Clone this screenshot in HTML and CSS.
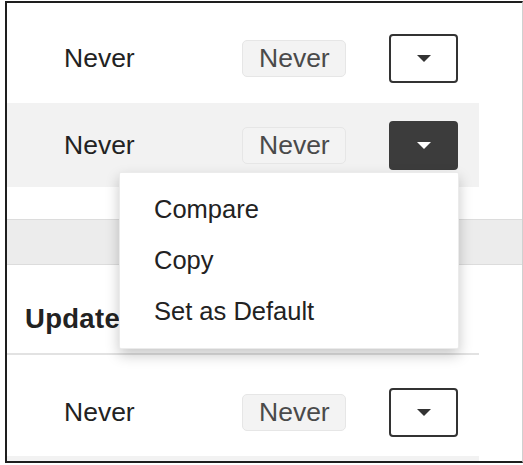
FILE: index.html
```html
<!DOCTYPE html>
<html lang="en">
<head>
    <meta charset="UTF-8">
    <meta name="viewport" content="width=device-width, initial-scale=1.0">
    <title>Versions</title>
    <link rel="stylesheet" href="styles.css">
</head>
<body>
<div class="frame">
    <!-- Верхние строки -->
    <div class="table">
        <div class="row row-first">
            <span class="cell-text">Never</span>
            <span class="badge">Never</span>
            <button class="toggle"><span class="caret"></span></button>
        </div>
        <div class="row row-active">
            <span class="cell-text">Never</span>
            <span class="badge">Never</span>
            <button class="toggle toggle-open"><span class="caret"></span></button>
        </div>
    </div>

    <div class="spacer"></div>
    <div class="band"></div>

    <!-- Следующая таблица -->
    <div class="table">
        <div class="head">
            <strong>Updated</strong>
        </div>
        <div class="row row-last">
            <span class="cell-text">Never</span>
            <span class="badge">Never</span>
            <button class="toggle"><span class="caret"></span></button>
        </div>
        <div class="row-tail"></div>
    </div>

    <!-- Выпадающее меню -->
    <ul class="menu">
        <li>Compare</li>
        <li>Copy</li>
        <li>Set as Default</li>
    </ul>
</div>
</body>
</html>
```

FILE: styles.css
```css
body {
    margin: 0;
    font-family: "Liberation Sans", Arial, sans-serif;
    color: #222;
    background: #fff;
}

.frame {
    position: relative;
    margin: 1px 0 0 5px;
    width: 515px;
    height: 458px;
    border: 2px solid #1e1e1e;
    border-right: 1px solid #d0d0d0;
    overflow: hidden;
}

.table {
    width: 472px;
}

.row {
    display: flex;
    align-items: center;
    padding-left: 57px;
    font-size: 26.5px;
}

.row-first {
    height: 90px;
    padding-top: 10px;
}

.row-active {
    height: 84px;
    background-color: #f2f2f2;
}

.row-last {
    height: 87px;
    padding-top: 14px;
}

.row-tail {
    height: 10px;
    background-color: #f2f2f2;
}

.cell-text {
    width: 178px;
    color: #222;
}

.badge {
    box-sizing: border-box;
    width: 104px;
    height: 37px;
    line-height: 35px;
    padding-left: 16px;
    background-color: #f3f3f3;
    border: 1px solid #e6e6e6;
    border-radius: 5px;
    color: #4a4a4a;
}

.toggle {
    box-sizing: border-box;
    width: 69px;
    height: 49px;
    margin-left: 43px;
    background: #fff;
    border: 2px solid #333;
    border-radius: 4px;
    padding: 0;
    display: flex;
    align-items: center;
    justify-content: center;
    cursor: pointer;
}

.toggle-open {
    background-color: #3c3c3c;
    border-color: #3c3c3c;
}

.caret {
    width: 0;
    height: 0;
    border-left: 7px solid transparent;
    border-right: 7px solid transparent;
    border-top: 7px solid #333;
}

.toggle-open .caret {
    border-top-color: #fff;
}

.spacer {
    height: 32px;
}

.band {
    height: 44px;
    background-color: #ececec;
    border-top: 1px solid #dcdcdc;
    border-bottom: 1px solid #dcdcdc;
}

.head {
    height: 86px;
    display: flex;
    align-items: center;
    padding: 0 0 0 18px;
    margin-top: 2px;
    font-size: 27.5px;
    letter-spacing: 0.3px;
    color: #222;
    border-bottom: 2px solid #e2e2e2;
}

.head strong {
    padding-top: 18px;
}

.menu {
    position: absolute;
    left: 112px;
    top: 169px;
    width: 338px;
    margin: 0;
    padding: 11px 0;
    list-style: none;
    background: #fff;
    border: 1px solid rgba(0, 0, 0, 0.08);
    border-radius: 2px;
    box-shadow: 0 6px 14px rgba(0, 0, 0, 0.22);
    font-size: 25.5px;
    color: #222;
}

.menu li {
    line-height: 51px;
    padding-left: 34px;
}
```
